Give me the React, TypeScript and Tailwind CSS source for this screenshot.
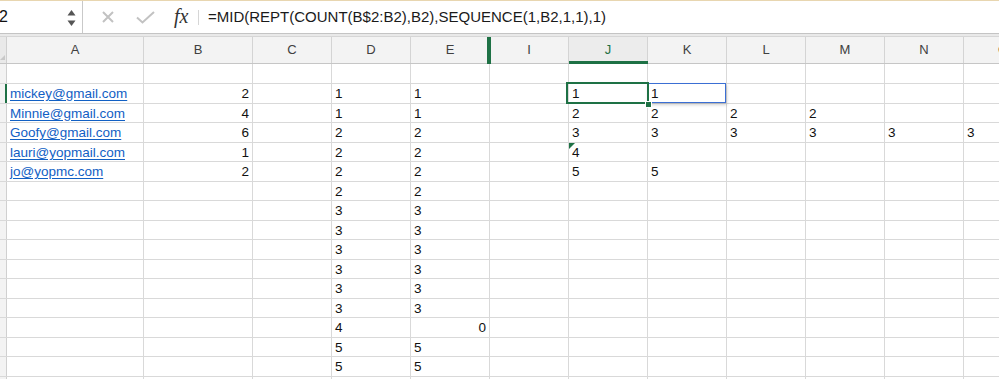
import React from 'react';

type Cell = { v: string; right?: boolean; link?: boolean };
type Row = Record<string, Cell>;

const COLS: { key: string; w: string }[] = [
  { key: 'A', w: 'w-[137px]' },
  { key: 'B', w: 'w-[109px]' },
  { key: 'C', w: 'w-[79px]' },
  { key: 'D', w: 'w-[79px]' },
  { key: 'E', w: 'w-[79px]' },
  { key: 'I', w: 'w-[79px]' },
  { key: 'J', w: 'w-[79px]' },
  { key: 'K', w: 'w-[79px]' },
  { key: 'L', w: 'w-[79px]' },
  { key: 'M', w: 'w-[79px]' },
  { key: 'N', w: 'w-[79px]' },
  { key: 'O', w: 'w-[79px]' },
];

const t = (v: string): Cell => ({ v });
const n = (v: string): Cell => ({ v, right: true });
const l = (v: string): Cell => ({ v, link: true });

const ROWS: Row[] = [
  { A: l('mickey@gmail.com'), B: n('2'), D: t('1'), E: t('1'), J: t('1'), K: t('1') },
  { A: l('Minnie@gmail.com'), B: n('4'), D: t('1'), E: t('1'), J: t('2'), K: t('2'), L: t('2'), M: t('2') },
  { A: l('Goofy@gmail.com'), B: n('6'), D: t('2'), E: t('2'), J: t('3'), K: t('3'), L: t('3'), M: t('3'), N: t('3'), O: t('3') },
  { A: l('lauri@yopmail.com'), B: n('1'), D: t('2'), E: t('2'), J: t('4') },
  { A: l('jo@yopmc.com'), B: n('2'), D: t('2'), E: t('2'), J: t('5'), K: t('5') },
  { D: t('2'), E: t('2') },
  { D: t('3'), E: t('3') },
  { D: t('3'), E: t('3') },
  { D: t('3'), E: t('3') },
  { D: t('3'), E: t('3') },
  { D: t('3'), E: t('3') },
  { D: t('3'), E: t('3') },
  { D: t('4'), E: n('0') },
  { D: t('5'), E: t('5') },
  { D: t('5'), E: t('5') },
  {},
];

function FormulaBar() {
  return (
    <div className="h-[37px] flex flex-col shrink-0">
      <div className="h-[1px] bg-[#e8d6b0]" />
      <div className="h-[33px] flex items-stretch bg-white border-b border-[#c4c4c4]">
        <div className="w-[83px] shrink-0 border-r border-[#c9c9c9] flex items-center relative">
          <span className="text-[16px] text-[#111] ml-[-1px]" style={{ fontFamily: '"Liberation Sans", Arial, sans-serif' }}>2</span>
          <svg className="absolute left-[67px] top-[8px]" width="9" height="18" viewBox="0 0 9 18">
            <polygon points="4.5,1 8.5,6.5 0.5,6.5" fill="#555" />
            <polygon points="0.5,11.5 8.5,11.5 4.5,17" fill="#555" />
          </svg>
        </div>
        <div className="w-[125px] shrink-0 flex items-center">
          <svg className="ml-[19px]" width="12" height="12" viewBox="0 0 12 12">
            <path d="M1 1 L11 11 M11 1 L1 11" stroke="#c2c2c2" strokeWidth="2" fill="none" />
          </svg>
          <svg className="ml-[22px]" width="19" height="13" viewBox="0 0 19 13">
            <path d="M1 6.5 L6.5 11.5 L18 1" stroke="#c2c2c2" strokeWidth="2" fill="none" />
          </svg>
          <span className="ml-[19px] text-[20px] italic text-[#333] leading-none mt-[-3px]" style={{ fontFamily: '"Liberation Serif", "Times New Roman", serif' }}>
            fx
          </span>
          <div className="ml-[10px] w-[1px] h-[15px] bg-[#d6d6d6]" />
        </div>
        <div className="flex-1 flex items-center pl-[0px]">
          <span className="text-[15px] text-[#1a1a1a] whitespace-nowrap" style={{ fontFamily: '"Liberation Sans", Arial, sans-serif' }}>
            =MID(REPT(COUNT(B$2:B2),B2),SEQUENCE(1,B2,1,1),1)
          </span>
        </div>
      </div>
      <div className="h-[3px] bg-[#e9e9e9] border-b border-[#d6d6d6]" />
    </div>
  );
}

function HeaderRow() {
  return (
    <div className="flex h-[27px] border-b border-[#c6c6c6] bg-[#f3f3f3] shrink-0">
      <div className="w-[7px] shrink-0 border-r border-[#cfcfcf] bg-[#e9e9e9] relative overflow-hidden">
        <div className="absolute right-[1px] bottom-[3px] w-0 h-0 border-l-[5px] border-l-transparent border-b-[5px] border-b-[#c8c8c8]" />
      </div>
      {COLS.map((c) => {
        const active = c.key === 'J';
        return (
          <div
            key={c.key}
            className={`${c.w} shrink-0 border-r border-[#d4d4d4] relative flex items-center justify-center text-[13px] ${active ? 'text-[#1e7145] bg-[#ececec]' : 'text-[#404040]'}`}
            style={{ fontFamily: '"Liberation Sans", Arial, sans-serif' }}
          >
            {c.key}
            {active && <div className="absolute left-0 right-[-1px] bottom-[-1px] h-[3px] bg-[#1e7145]" />}
            {c.key === 'E' && <div className="absolute right-[-2px] top-0 bottom-[-1px] w-[4px] bg-[#1e7145]" />}
          </div>
        );
      })}
    </div>
  );
}

function DataRow({ row, idx }: { row: Row; idx: number }) {
  const activeRow = idx === 0;
  return (
    <div className="flex h-[19.5px] border-b border-[#d9d9d9] shrink-0">
      <div className={`w-[7px] shrink-0 bg-[#f3f3f3] ${activeRow ? 'border-r-2 border-[#1e7145]' : 'border-r border-[#d0d0d0]'}`} />
      {COLS.map((c) => {
        const cell = row[c.key];
        const isSel = activeRow && c.key === 'J';
        const isBlue = activeRow && c.key === 'K';
        const hasTri = idx === 3 && c.key === 'J';
        return (
          <div
            key={c.key}
            className={`${c.w} shrink-0 border-r border-[#d9d9d9] relative px-[3px] pt-[1px] text-[13.5px] leading-[18px] whitespace-nowrap ${cell?.right ? 'text-right' : 'text-left'}`}
          >
            {isBlue && (
              <div className="absolute left-[-1px] top-[-1px] right-[0px] bottom-[0px] border border-[#3b6fd4] shadow-[1px_2px_3px_rgba(0,0,0,0.18)] z-10" />
            )}
            {cell &&
              (cell.link ? (
                <span className="text-[#1160c4] underline underline-offset-[2px]">{cell.v}</span>
              ) : (
                <span className="text-[#111]">{cell.v}</span>
              ))}
            {hasTri && (
              <div className="absolute left-0 top-0 w-0 h-0 border-t-[6px] border-t-[#1e7145] border-r-[6px] border-r-transparent" />
            )}
            {isSel && (
              <>
                <div className="absolute left-[-3px] top-[-2px] right-[-2px] bottom-[-1px] border-2 border-[#1e7145] z-20" />
                <div className="absolute right-[-5px] bottom-[-5px] w-[7px] h-[7px] bg-[#1e7145] border border-white z-30" />
              </>
            )}
          </div>
        );
      })}
    </div>
  );
}

export default function App() {
  return (
    <div
      className="w-[999px] h-[379px] overflow-hidden bg-white flex flex-col"
      style={{ fontFamily: '"Liberation Sans", Arial, sans-serif' }}
    >
      <FormulaBar />
      <HeaderRow />
      <div className="flex h-[20px] border-b border-[#d9d9d9] shrink-0">
        <div className="w-[7px] shrink-0 bg-[#f3f3f3] border-r border-[#d0d0d0]" />
        {COLS.map((c) => (
          <div key={c.key} className={`${c.w} shrink-0 border-r border-[#d9d9d9]`} />
        ))}
      </div>
      {ROWS.map((r, i) => (
        <DataRow key={i} row={r} idx={i} />
      ))}
    </div>
  );
}
